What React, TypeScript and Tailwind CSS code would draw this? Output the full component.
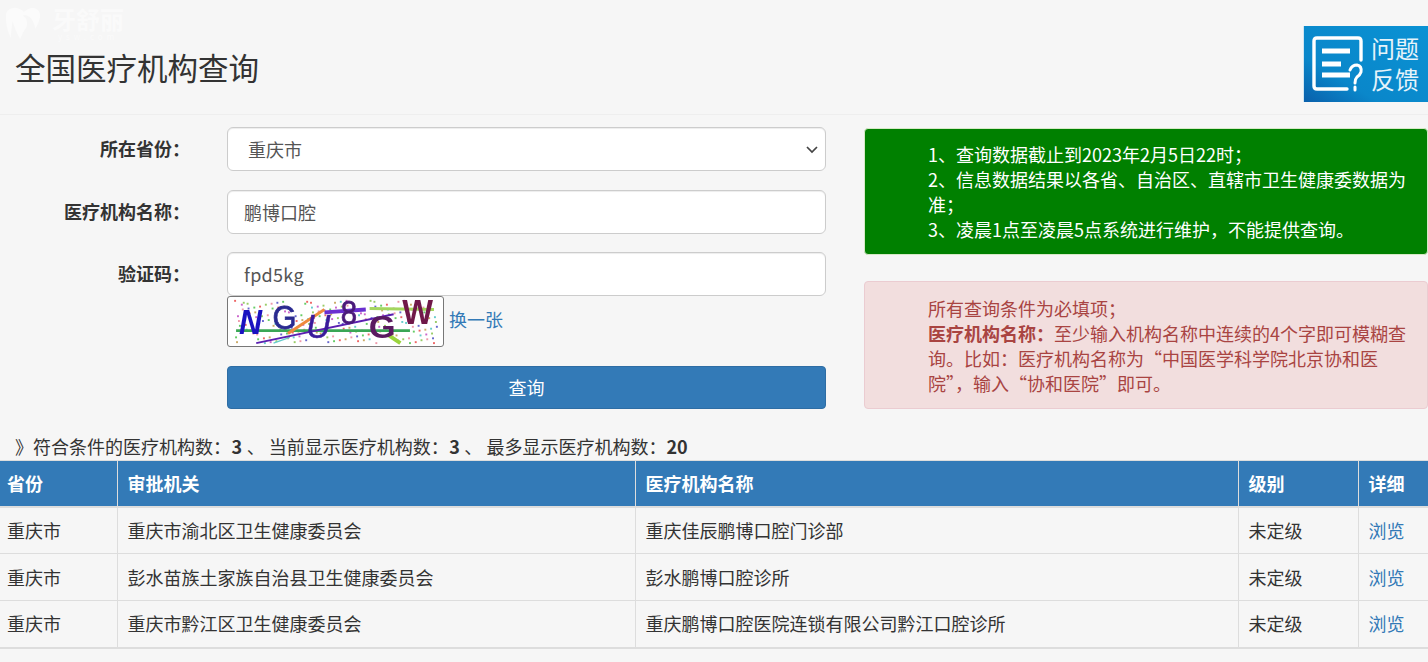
const font = "font-['Noto_Sans_CJK_SC','Noto_Sans',sans-serif]"

const rows = [
  ["重庆市", "重庆市渝北区卫生健康委员会", "重庆佳辰鹏博口腔门诊部"],
  ["重庆市", "彭水苗族土家族自治县卫生健康委员会", "彭水鹏博口腔诊所"],
  ["重庆市", "重庆市黔江区卫生健康委员会", "重庆鹏博口腔医院连锁有限公司黔江口腔诊所"],
]

// speckle noise of the captcha
const colors = ["#e66", "#6c6", "#66c", "#e9a", "#9c6", "#c6c", "#6cc", "#ca6"]
const dots = Array.from({ length: 190 }, (_, i) => ({
  x: 3 + ((i * 73) % 211),
  y: 3 + ((i * 37 + (i % 7) * 11) % 45),
  c: colors[i % colors.length],
}))

function Captcha() {
  return (
    <svg width="217" height="51" viewBox="0 0 217 51" className="block rounded-[3px] border border-[#777] bg-white blur-[0.3px]">
      {dots.map((d, i) => (
        <rect key={i} x={d.x} y={d.y} width="2" height="2" fill={d.c} />
      ))}
      <path d="M5 35 L186 35" stroke="#3aa655" strokeWidth="3" />
      <path d="M144 12 L211 13" stroke="#a4d65e" strokeWidth="3" />
      <path d="M97 16 L140 13" stroke="#6a2fd0" strokeWidth="4" />
      <path d="M59 38 L97 13" stroke="#ef8a3c" strokeWidth="3" />
      <path d="M164 40 L176 48" stroke="#9ad43c" strokeWidth="4" />
      <path d="M44 48 L61 42" stroke="#6cc" strokeWidth="1.5" />
      <path d="M26 48 L169 18" stroke="#5a1fb0" strokeWidth="2" />
      <g fontFamily="'Liberation Sans',sans-serif">
        <text x="8" y="38" fontSize="36" fontWeight="700" fontStyle="italic" fill="#1a12c0" textLength="24" lengthAdjust="spacingAndGlyphs">N</text>
        <text x="43" y="33" fontSize="35" fill="#2a2a90" stroke="#2a2a90" strokeWidth="0.8" textLength="25" lengthAdjust="spacingAndGlyphs">G</text>
        <text x="78" y="43" fontSize="35" fontStyle="italic" fill="#3a1a9a" stroke="#3a1a9a" strokeWidth="0.6" textLength="25" lengthAdjust="spacingAndGlyphs">U</text>
        <text x="114" y="28" fontSize="35" fill="#4a1a7a" stroke="#4a1a7a" strokeWidth="0.8" textLength="17" lengthAdjust="spacingAndGlyphs">8</text>
        <text x="143" y="43" fontSize="32" fontWeight="700" fill="#5a1a60" textLength="28" lengthAdjust="spacingAndGlyphs">G</text>
        <text x="178" y="28" fontSize="36" fontWeight="700" fill="#701848" textLength="32" lengthAdjust="spacingAndGlyphs">W</text>
      </g>
    </svg>
  )
}

function FeedbackBadge() {
  return (
    <div className="flex h-[76px] w-[125px] items-center border-l border-[#cfe6f3] bg-gradient-to-tr from-[#0a60ab] via-[#0a87ca] via-30% to-[#0a92d4] pl-[8px] text-white">
      <svg width="54" height="56" viewBox="0 0 54 56" fill="none" stroke="white" strokeLinecap="round" className="shrink-0">
        <path d="M49 24 V5 Q49 2 46 2 H5 Q2 2 2 5 V50 Q2 53 5 53 H35" strokeWidth="3.4" />
        <path d="M10 15 H38 M10 28 H29 M10 39 H38" strokeWidth="5" strokeLinecap="butt" />
        <path d="M38 34 Q40 29 45 29 Q50 30 49 36 Q48 39 45 41 Q43 43 43 47 M43 51 V54" strokeWidth="3" />
      </svg>
      <div className="mb-[2px] ml-[5px] text-[24px] leading-[31px] text-white/90">
        <div>问题</div>
        <div>反馈</div>
      </div>
    </div>
  )
}

function Watermark() {
  return (
    <div className="absolute left-[4px] top-[5px] flex items-start">
      <svg width="38" height="38" viewBox="0 0 40 38" fill="white" fillOpacity="0.5">
        <path d="M2 9 Q4 1 13 2 Q18 3 21 6 Q26 2 31 2 Q39 4 38 12 Q36 20 33 24 Q31 14 26 11 Q23 9 20 10 Q26 14 24 22 Q20 27 17 35 Q11 24 9 16 Q8 24 7 34 Q1 20 2 9Z" />
      </svg>
      <div className="ml-[10px] flex flex-col items-center">
        <div className="text-[24px] font-bold leading-[28px] text-white/50">牙舒丽</div>
        <div className="text-[8px] leading-[8px] tracking-[4px] text-white/50">ysw.com</div>
      </div>
    </div>
  )
}

function Label({ children }: { children: string }) {
  return <label className="mb-[2px] w-[190px] shrink-0 text-right font-bold">{children}</label>
}

const inputClass =
  "h-[44px] w-full rounded-[6px] border border-[#ccc] bg-white px-[16px] text-[18px] text-[#555] shadow-[inset_0_1px_1px_rgba(0,0,0,0.075)] outline-none"

export default function App() {
  return (
    <div className={`${font} relative h-[662px] w-[1428px] overflow-hidden bg-[#f6f6f6] text-[18px] leading-[25px] text-[#333]`}>
      <Watermark />
      <header className="flex h-[115px] items-start justify-between border-b border-[#eee] pl-[15px]">
        <h1 className="mt-[45px] text-[30.5px] leading-[44px] text-[#333]">全国医疗机构查询</h1>
        <div className="mt-[26px]">
          <FeedbackBadge />
        </div>
      </header>

      <div className="flex">
        <form className="w-[826px] shrink-0 pt-[12px]">
          <div className="flex items-center">
            <Label>所在省份：</Label>
            <div className="relative ml-[37px] w-full">
              <div className={`${inputClass} flex items-center pl-[20px]`}>重庆市</div>
              <svg width="14" height="14" viewBox="0 0 14 14" fill="none" stroke="#444" strokeWidth="1.7" className="absolute right-[7px] top-[15px]">
                <path d="M2 5 L7 10 L12 5" />
              </svg>
            </div>
          </div>
          <div className="mt-[19px] flex items-center">
            <Label>医疗机构名称：</Label>
            <div className="ml-[37px] w-full">
              <div className={`${inputClass} flex items-center`}>鹏博口腔</div>
            </div>
          </div>
          <div className="mt-[18px] flex items-center">
            <Label>验证码：</Label>
            <div className="ml-[37px] w-full">
              <div className={`${inputClass} flex items-center tracking-[0.3px]`}>fpd5kg</div>
            </div>
          </div>
          <div className="ml-[227px] flex items-center">
            <Captcha />
            <a className="mb-[4px] ml-[5px] text-[#337ab7]">换一张</a>
          </div>
          <div className="ml-[227px] mt-[19px]">
            <button type="button" className="h-[43px] w-full rounded-[4px] border border-[#2e6da4] bg-[#337ab7] text-white">
              查询
            </button>
          </div>
        </form>

        <div className="ml-[38px] w-[564px] pt-[13px]">
          <div className="h-[127px] rounded-[4px] border border-[#d6e9c6] bg-[#008000] py-[13px] pl-[63px] pr-[14px] text-white">
            1、查询数据截止到2023年2月5日22时；
            <br />
            2、信息数据结果以各省、自治区、直辖市卫生健康委数据为准；
            <br />
            3、凌晨1点至凌晨5点系统进行维护，不能提供查询。
          </div>
          <div className="mt-[26px] h-[128px] rounded-[4px] border border-[#ebccd1] bg-[#f2dede] py-[14px] pl-[63px] pr-[14px] text-[#a94442]">
            所有查询条件为必填项；
            <br />
            <b>医疗机构名称：</b>至少输入机构名称中连续的4个字即可模糊查询。比如：医疗机构名称为“中国医学科学院北京协和医院”，输入“协和医院”即可。
          </div>
        </div>
      </div>

      <p className="mb-[1px] mt-[25px] pl-[15px]">
        》符合条件的医疗机构数：<b className="mx-[0.5px]">3</b> 、 当前显示医疗机构数：<b className="mx-[0.5px]">3</b> 、 最多显示医疗机构数：<b>20</b>
      </p>

      <table className="w-[1428px] table-fixed border-collapse">
        <colgroup>
          <col className="w-[117px]" />
          <col className="w-[518px]" />
          <col className="w-[603px]" />
          <col className="w-[120px]" />
          <col className="w-[70px]" />
        </colgroup>
        <thead>
          <tr className="h-[46px] bg-[#337ab7] text-left text-white">
            {["省份", "审批机关", "医疗机构名称", "级别", "详细"].map((h, i) => (
              <th key={h} className={`border-x border-b-2 border-t border-[#ddd] font-bold first:border-l-0 last:border-r-0 ${i === 0 ? "pl-[7px]" : "pl-[10px]"}`}>
                {h}
              </th>
            ))}
          </tr>
        </thead>
        <tbody className="border-b-2 border-[#ddd]">
          {rows.map((r, i) => (
            <tr key={i} className="h-[47px] border-b border-[#ddd]">
              <td className="border-r border-[#ddd] pl-[7px]">{r[0]}</td>
              <td className="border-r border-[#ddd] pl-[10px]">{r[1]}</td>
              <td className="border-r border-[#ddd] pl-[10px]">{r[2]}</td>
              <td className="border-r border-[#ddd] pl-[10px]">未定级</td>
              <td className="pl-[10px] text-[#337ab7]">浏览</td>
            </tr>
          ))}
        </tbody>
      </table>
    </div>
  )
}
